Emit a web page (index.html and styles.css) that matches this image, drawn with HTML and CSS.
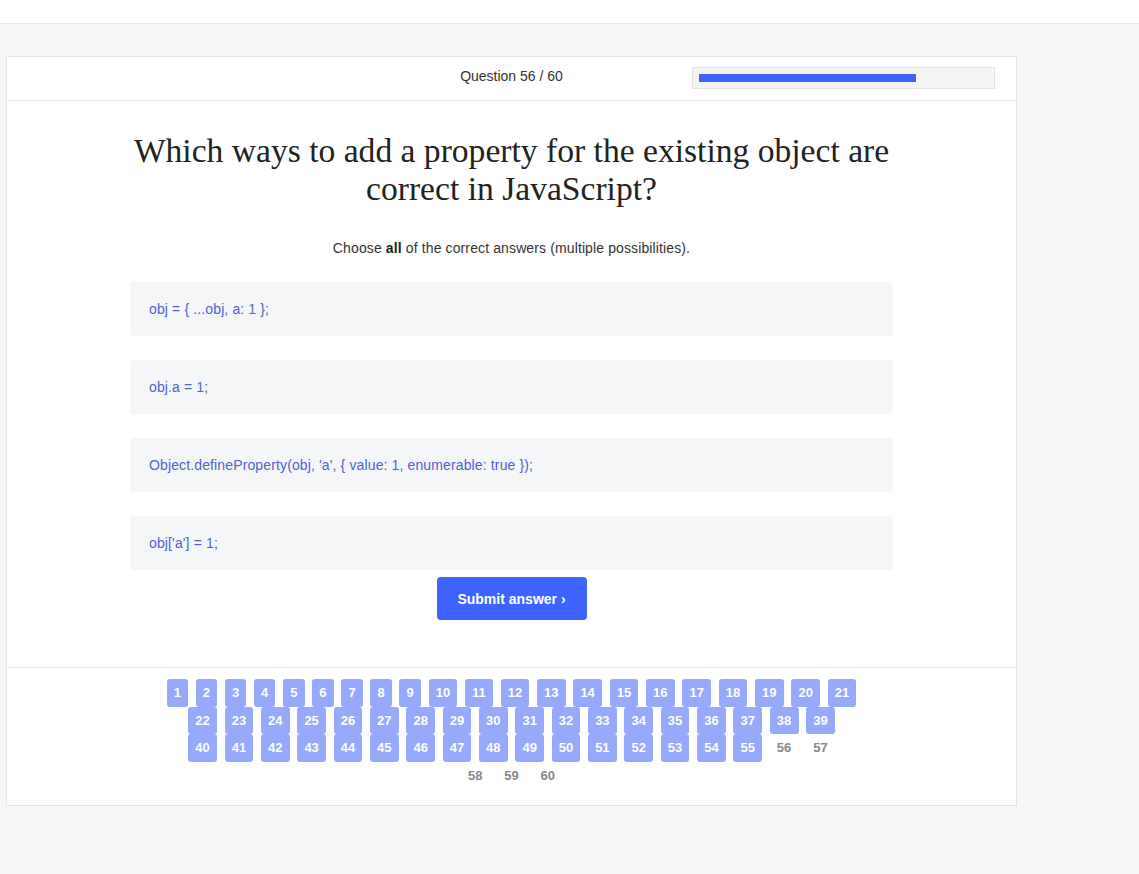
FILE: index.html
```html
<!DOCTYPE html>
<html lang="en">
<head>
<meta charset="utf-8">
<title>Quiz</title>
<link rel="stylesheet" href="styles.css">
</head>
<body>
<header class="topbar"></header>
<main class="page">
  <section class="card">
    <div class="card-head">
      <div class="head-side"></div>
      <div class="counter">Question 56 / 60</div>
      <div class="head-side head-right">
        <div class="progress"><div class="progress-fill" style="width:75%"></div></div>
      </div>
    </div>
    <div class="card-body">
      <div class="content">
        <h1 class="title">Which ways to add a property for the existing object are correct in JavaScript?</h1>
        <p class="hint">Choose <strong>all</strong> of the correct answers (multiple possibilities).</p>
        <div class="options">
          <div class="option">obj = { ...obj, a: 1 };</div>
          <div class="option">obj.a = 1;</div>
          <div class="option">Object.defineProperty(obj, 'a', { value: 1, enumerable: true });</div>
          <div class="option">obj['a'] = 1;</div>
        </div>
        <div class="actions"><button class="submit">Submit answer ›</button></div>
      </div>
    </div>
    <div class="card-foot">
      <div class="row">
        <span class="q done">1</span><span class="q done">2</span><span class="q done">3</span><span class="q done">4</span><span class="q done">5</span><span class="q done">6</span><span class="q done">7</span><span class="q done">8</span><span class="q done">9</span><span class="q done">10</span><span class="q done">11</span><span class="q done">12</span><span class="q done">13</span><span class="q done">14</span><span class="q done">15</span><span class="q done">16</span><span class="q done">17</span><span class="q done">18</span><span class="q done">19</span><span class="q done">20</span><span class="q done">21</span>
      </div>
      <div class="row">
        <span class="q done">22</span><span class="q done">23</span><span class="q done">24</span><span class="q done">25</span><span class="q done">26</span><span class="q done">27</span><span class="q done">28</span><span class="q done">29</span><span class="q done">30</span><span class="q done">31</span><span class="q done">32</span><span class="q done">33</span><span class="q done">34</span><span class="q done">35</span><span class="q done">36</span><span class="q done">37</span><span class="q done">38</span><span class="q done">39</span>
      </div>
      <div class="row">
        <span class="q done">40</span><span class="q done">41</span><span class="q done">42</span><span class="q done">43</span><span class="q done">44</span><span class="q done">45</span><span class="q done">46</span><span class="q done">47</span><span class="q done">48</span><span class="q done">49</span><span class="q done">50</span><span class="q done">51</span><span class="q done">52</span><span class="q done">53</span><span class="q done">54</span><span class="q done">55</span><span class="q">56</span><span class="q">57</span>
      </div>
      <div class="row">
        <span class="q">58</span><span class="q">59</span><span class="q">60</span>
      </div>
    </div>
  </section>
</main>
</body>
</html>
```
FILE: styles.css
```css
html, body {
  margin: 0;
  padding: 0;
}
body {
  background: #f6f6f6;
  font-family: "Liberation Sans", Arial, sans-serif;
  color: #333;
}
.topbar {
  height: 23px;
  background: #fff;
  border-bottom: 1px solid #e6e6e6;
}
.page {
  padding: 32px 0 0 6px;
}
.card {
  width: 1009px;
  background: #fff;
  border: 1px solid #e4e4e4;
}
.card-head {
  height: 43px;
  border-bottom: 1px solid #e4e4e4;
  display: grid;
  grid-template-columns: 1fr auto 1fr;
  align-items: center;
}
.counter {
  font-size: 14px;
  line-height: 16px;
  color: #333;
  margin-bottom: 5px;
}
.head-right {
  display: flex;
  justify-content: flex-end;
  padding-right: 21px;
}
.progress {
  width: 303px;
  height: 22px;
  background: #f4f4f4;
  border: 1px solid #e2e2e2;
  padding: 6px;
  box-sizing: border-box;
  display: flex;
  align-items: center;
  margin-bottom: 1px;
}
.progress-fill {
  height: 8px;
  background: #3d63f7;
}
.card-body {
  display: flex;
  justify-content: center;
  padding: 31px 0 47px;
}
.content {
  width: 763px;
}
.title {
  margin: 0;
  font-family: "Liberation Serif", "Times New Roman", serif;
  font-weight: normal;
  font-size: 33.6px;
  line-height: 38px;
  color: #222;
  text-align: center;
}
.hint {
  margin: 31px 0 0;
  font-size: 14px;
  line-height: 18px;
  letter-spacing: 0.12px;
  text-align: center;
  color: #333;
}
.hint strong {
  font-weight: bold;
  color: #222;
}
.options {
  margin-top: 25px;
  display: flex;
  flex-direction: column;
  gap: 24px;
}
.option {
  background: #f5f6f8;
  border-radius: 4px;
  padding: 19px 19px;
  font-size: 14px;
  line-height: 16px;
  letter-spacing: 0.13px;
  color: #4e62d6;
}
.actions {
  display: flex;
  justify-content: center;
  margin-top: 7px;
}
.submit {
  width: 150px;
  height: 43px;
  border: none;
  border-radius: 4px;
  background: #3e64ff;
  color: #fff;
  font-family: "Liberation Sans", Arial, sans-serif;
  font-weight: bold;
  font-size: 14px;
}
.card-foot {
  border-top: 1px solid #e6e6e6;
  padding: 11px 0 16px;
}
.row {
  display: flex;
  justify-content: center;
  gap: 7.5px;
}
.q {
  display: block;
  height: 27.5px;
  line-height: 27.5px;
  padding: 0 7.2px;
  font-size: 13px;
  font-weight: bold;
  color: #888;
  border-radius: 3px;
}
.q.done {
  background: #96a9fa;
  color: #fff;
}
```
